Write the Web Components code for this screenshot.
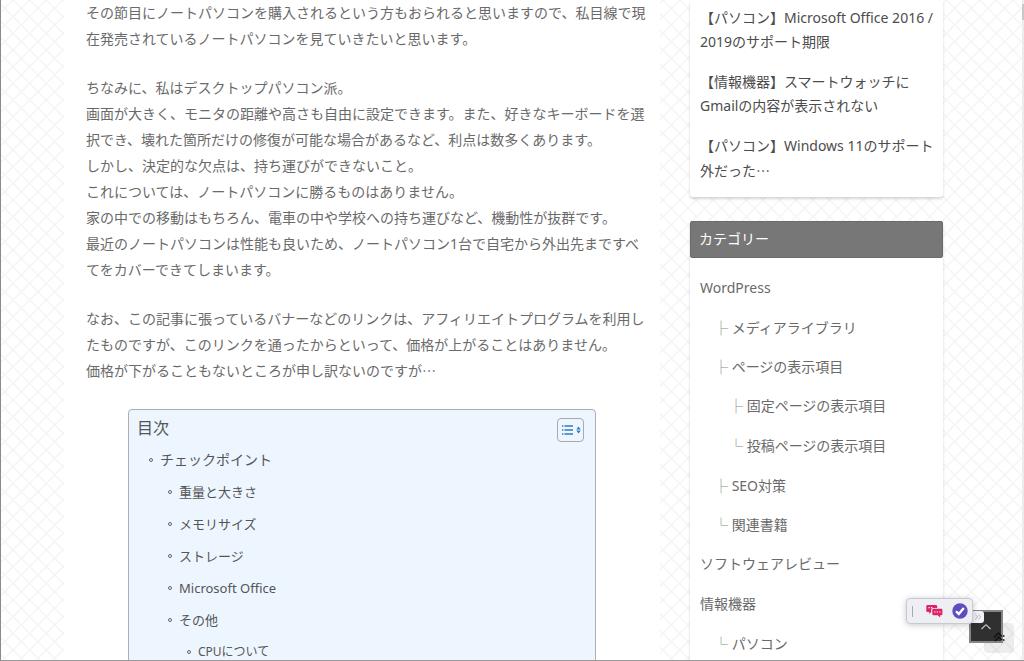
<!DOCTYPE html>
<html lang="ja">
<head>
<meta charset="utf-8">
<meta name="viewport" content="width=device-width, initial-scale=1">
<title>ノートパソコンの選び方</title>
<style>
html,body{margin:0;height:100%;overflow:hidden}
body{font-family:"Noto Sans","Noto Sans CJK JP",sans-serif;font-size:14px;line-height:24px;color:#6a6a6a}
.dots{font-family:"Noto Sans CJK JP",sans-serif;line-height:1}
</style>
</head>
<body>
<blog-page>
  <article-body>
    <p>その節目にノートパソコンを購入されるという方もおられると思いますので、私目線で現在発売されているノートパソコンを見ていきたいと思います。</p>
    <p>ちなみに、私はデスクトップパソコン派。<br>画面が大きく、モニタの距離や高さも自由に設定できます。また、好きなキーボードを選択でき、壊れた箇所だけの修復が可能な場合があるなど、利点は数多くあります。<br>しかし、決定的な欠点は、持ち運びができないこと。<br>これについては、ノートパソコンに勝るものはありません。<br>家の中での移動はもちろん、電車の中や学校への持ち運びなど、機動性が抜群です。<br>最近のノートパソコンは性能も良いため、ノートパソコン1台で自宅から外出先まですべてをカバーできてしまいます。</p>
    <p>なお、この記事に張っているバナーなどのリンクは、アフィリエイトプログラムを利用したものですが、このリンクを通ったからといって、価格が上がることはありません。<br>価格が下がることもないところが申し訳ないのですが<span class="dots">…</span></p>
    <table-of-contents></table-of-contents>
  </article-body>
  <side-card slot="side">
    <recent-posts></recent-posts>
  </side-card>
  <side-card slot="side" heading="カテゴリー">
    <category-list></category-list>
  </side-card>
</blog-page>
<floating-tools></floating-tools>

<script>
function define(name, html, setup){
  customElements.define(name, class extends HTMLElement{
    connectedCallback(){
      if(this.shadowRoot) return;
      const t=document.createElement('template');
      t.innerHTML=html;
      this.attachShadow({mode:'open'}).append(t.content.cloneNode(true));
      if(setup) setup(this, this.shadowRoot);
    }
  });
}

define('blog-page', `
<style>
:host{display:block;box-sizing:border-box;height:100vh;overflow:hidden;border-left:1px solid #8a8a8a;border-bottom:1px solid #999;
 background:#fff url("data:image/svg+xml,%3Csvg xmlns='http://www.w3.org/2000/svg' width='50' height='50' viewBox='0 0 3 3'%3E%3Cpath d='M0 0L3 3M1 0L3 2M2 0L3 1M0 1L2 3M0 2L1 3M3 0L0 3M1 0L0 1M2 0L0 2M3 1L1 3M3 2L2 3' stroke='%23f5f5f5' stroke-width='.09' stroke-linecap='square'/%3E%3C/svg%3E") 12px 0}
.cols{display:grid;grid-template-columns:minmax(0,1fr) 253px;gap:30px;margin:0 81px 0 63px;align-items:start}
aside{display:flex;flex-direction:column;gap:24px}
.track{position:fixed;right:0;top:0;bottom:1px;width:2px;background:#ececec}
.track::before{content:"";display:block;height:16px;margin-top:4px;background:#c8c8c8}
</style>
<div class="cols"><main><slot></slot></main><aside><slot name="side"></slot></aside></div>
<div class="track"></div>`);

define('article-body', `
<style>
:host{display:block;background:#fff;padding:0 12px 0 22px;line-height:26px}
::slotted(p){margin:0 0 23px}
::slotted(table-of-contents){margin:25px 52px 0 42px}
</style>
<slot></slot>`);

define('table-of-contents', `
<style>
:host{display:block;border:1px solid #aab0b6;border-radius:4px;background:#edf6ff;padding:8px 11px 24px 8px;color:#555}
header{display:flex;justify-content:space-between;align-items:flex-start}
h2{margin:0;font-size:16px;line-height:20px;font-weight:400}
button{width:27px;height:24px;padding:0;border:1px solid #aaa;border-radius:4px;background:none;display:flex;align-items:center;justify-content:center}
nav{margin-top:2px}
ul{list-style:none;margin:0;padding:0 0 0 12px;font-size:14px;line-height:32px}
ul ul{padding-left:19px;font-size:13px}
ul ul ul{font-size:12px}
a{color:inherit;text-decoration:none;display:flex;align-items:center;gap:7px}
a::before{content:"";box-sizing:border-box;width:4px;height:4px;border:1px solid #666;border-radius:50%}
</style>
<header><h2>目次</h2><button aria-label="目次の表示切り替え">
<svg width="21" height="12" viewBox="0 0 21 12"><g stroke="#3179bd" stroke-width="1.500"><path d="M2 2h1.400M2 6h1.400M2 10h1.400M4.500 2h8.500M4.500 6h8.500M4.500 10h8.500"/></g><path d="M18.500 2.500l2.200 3h-4.400zM18.500 9.500l2.200-3h-4.400z" fill="#3179bd"/></svg></button></header>
<nav><ul><li><a href="#check">チェックポイント</a><ul>
<li><a href="#weight">重量と大きさ</a></li>
<li><a href="#memory">メモリサイズ</a></li>
<li><a href="#storage">ストレージ</a></li>
<li><a href="#office">Microsoft Office</a></li>
<li><a href="#other">その他</a><ul><li><a href="#cpu">CPUについて</a></li></ul></li>
</ul></li></ul></nav>`);

define('side-card', `
<style>
:host{display:block;background:#fff;border-radius:3px;box-shadow:0 2px 3px rgba(0,0,0,.16)}
h2{margin:0;padding:0 8px 2px;font-size:14px;line-height:33px;font-weight:400;color:#fff;background:#777;border:1px solid #6b6b6b;border-radius:2px}
h2[hidden]{display:none}
</style>
<h2 hidden></h2><slot></slot>`, (host, root)=>{
  const t=host.getAttribute('heading');
  if(t){const h=root.querySelector('h2');h.textContent=t;h.hidden=false}
});

define('recent-posts', `
<style>
:host{display:block;padding:6px 4px 15px 10px;color:#4c4c4c}
ul{list-style:none;margin:0;padding:0;display:grid;gap:16px}
a{color:inherit;text-decoration:none;display:block}
.tail{display:inline-block;font-family:"Noto Sans CJK JP",sans-serif;vertical-align:top}
</style>
<ul>
<li><a href="#office-support">【パソコン】Microsoft Office 2016 / 2019のサポート期限</a></li>
<li><a href="#watch">【情報機器】スマートウォッチにGmailの内容が表示されない</a></li>
<li><a href="#win11">【パソコン】Windows 11のサポート<span class="tail">外だった…</span></a></li>
</ul>`);

define('category-list', `
<style>
:host{display:block;padding:10px 10px 24px}
ul{list-style:none;margin:0;padding:0;line-height:40px}
ul ul{padding-left:14px;line-height:39px}
ul ul ul{padding-left:15px;line-height:40px}
a{color:inherit;text-decoration:none}
li{white-space:nowrap}
i{font-style:normal;color:#888}
</style>
<ul>
<li><a href="#wordpress">WordPress</a><ul>
 <li><i>├</i> <a href="#media">メディアライブラリ</a></li>
 <li><i>├</i> <a href="#pages">ページの表示項目</a><ul>
  <li><i>├</i> <a href="#fixed">固定ページの表示項目</a></li>
  <li><i>└</i> <a href="#posts">投稿ページの表示項目</a></li></ul></li>
 <li><i>├</i> <a href="#seo">SEO対策</a></li>
 <li><i>└</i> <a href="#books">関連書籍</a></li></ul></li>
<li><a href="#software">ソフトウェアレビュー</a></li>
<li><a href="#devices">情報機器</a><ul>
 <li><i>└</i> <a href="#pc">パソコン</a></li></ul></li>
</ul>`);

define('floating-tools', `
<style>
:host{position:fixed;right:10px;bottom:8px;width:108px;height:55px}
.home,.top,.mark,.more,.bar{position:absolute;box-sizing:border-box}
button{padding:0;border:0;background:none;display:flex;align-items:center;justify-content:center}
.home{right:0;bottom:0;width:30px;height:30px;border-radius:4px;background:rgba(0,0,0,.07)}
.top{left:63px;top:12px;width:34px;height:33px;background:#303030;border:2px solid #858585}
.mark{left:87px;top:34px}
.more{left:66px;top:13px;width:12px;height:12px;background:#f2f2f6;border-radius:0 3px 3px 0}
.bar{left:0;top:0;width:67px;height:26px;display:flex;align-items:center;border:1px solid #c9c9d0;border-radius:4px;background:#eeeef5;box-shadow:0 1px 6px rgba(0,0,0,.22);padding:0 4px 0 5px}
.grip{width:1px;height:11px;background:#aaa;margin-right:auto}
.bar button+button{margin-left:9px}
svg{display:block}
</style>
<button class="home" aria-label="ページ先頭"></button>
<button class="top" aria-label="上へ戻る"><svg width="12" height="8" viewBox="0 0 12 8"><path d="M1.500 6L6 1.700 10.500 6" fill="none" stroke="#ccc" stroke-width="1.100"/></svg></button>
<svg class="mark" width="12" height="10" viewBox="0 0 12 10"><path d="M1 5.500L5.500 1 9 4.500M2 9l4-4 3 3" fill="none" stroke="#111" stroke-width="1.300"/><path d="M10 4h1.500M10 8h1.500" stroke="#111" stroke-width="1.500"/></svg>
<button class="more" aria-label="もっと見る"><svg width="8" height="8" viewBox="0 0 8 8"><path d="M1.500 1.500L3.500 4l-2 2.500M4.500 1.500l2 2.500-2 2.500" fill="none" stroke="#bbb"/></svg></button>
<div class="bar"><span class="grip"></span>
<button aria-label="チャット"><svg width="17" height="14" viewBox="0 0 17 14"><path d="M1.500 1h8.500a1.200 1.200 0 0 1 1.200 1.200V4H7a1.800 1.800 0 0 0-1.800 1.800V8L3.300 10V8H1.500A1.200 1.200 0 0 1 .3 6.800V2.200A1.200 1.200 0 0 1 1.500 1z" fill="#dc2466"/><path d="M7.500 4.800h7.700a1.200 1.200 0 0 1 1.200 1.200v4a1.200 1.200 0 0 1-1.200 1.200h-1v2.200l-2.400-2.200H7.500A1.200 1.200 0 0 1 6.300 10V6a1.200 1.200 0 0 1 1.200-1.200z" fill="#dc2466"/><path d="M8.200 8h1.300M10.700 8H12M13.200 8h1.300M2.500 3.600h1.200M5 3.600h1.200" stroke="#fff" stroke-width="1.200"/></svg></button>
<button aria-label="チェック"><svg width="16" height="16" viewBox="0 0 16 16"><circle cx="8" cy="8" r="7.700" fill="#604dbd"/><path d="M4 8.300l2.800 2.800 5-6" fill="none" stroke="#fff" stroke-width="2.300"/></svg></button></div>`);
</script>
</body>
</html>
